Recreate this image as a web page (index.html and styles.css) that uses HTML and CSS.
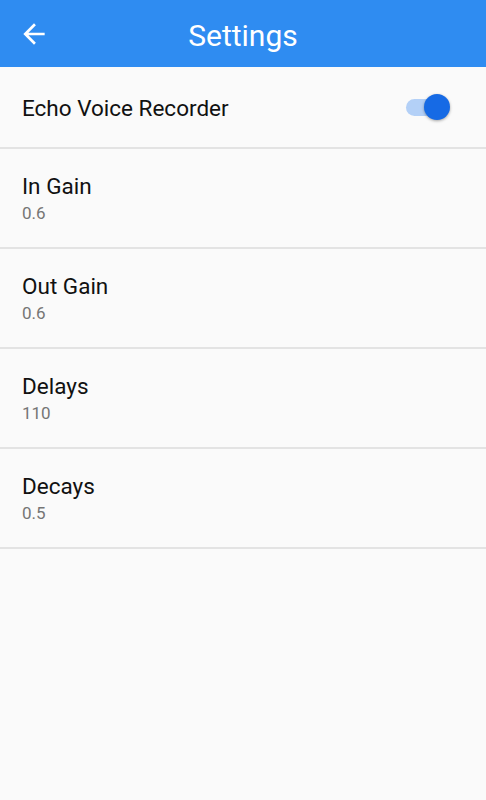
FILE: index.html
```html
<!DOCTYPE html>
<html lang="en">
<head>
    <meta charset="UTF-8">
    <meta name="viewport" content="width=device-width, initial-scale=1.0">
    <title>Settings</title>
    <link rel="stylesheet" href="styles.css">
</head>
<body>

<div class="toolbar">
    <button class="back-btn" aria-label="Back">
        <svg width="32" height="32" viewBox="0 0 24 24"><path fill="#fff" d="M20 11H7.83l5.59-5.59L12 4l-8 8 8 8 1.41-1.41L7.83 13H20v-2z"/></svg>
    </button>
    <h1>Settings</h1>
</div>

<ul class="prefs">
    <li class="pref pref-switch">
        <span class="pref-title">Echo Voice Recorder</span>
        <span class="switch on"><span class="track"></span><span class="thumb"></span></span>
    </li>
    <li class="pref">
        <span class="pref-title">In Gain</span>
        <span class="pref-summary">0.6</span>
    </li>
    <li class="pref">
        <span class="pref-title">Out Gain</span>
        <span class="pref-summary">0.6</span>
    </li>
    <li class="pref">
        <span class="pref-title">Delays</span>
        <span class="pref-summary">110</span>
    </li>
    <li class="pref">
        <span class="pref-title">Decays</span>
        <span class="pref-summary">0.5</span>
    </li>
</ul>

</body>
</html>
```

FILE: styles.css
```css
body {
    font-family: Roboto, "Noto Sans", sans-serif;
    background-color: #fafafa;
    margin: 0;
    padding: 0;
}
.toolbar {
    position: relative;
    height: 64px;
    padding-top: 3px;
    background-color: #2f8cf1;
    display: flex;
    align-items: center;
    justify-content: center;
}
.back-btn {
    position: absolute;
    left: 18px;
    top: 18px;
    width: 32px;
    height: 32px;
    padding: 0;
    border: none;
    background: none;
    display: flex;
}
.toolbar h1 {
    margin: 0;
    color: #fff;
    font-size: 30px;
    font-weight: 400;
}
.prefs {
    list-style: none;
    margin: 0;
    padding: 0;
}
.pref {
    display: flex;
    flex-direction: column;
    justify-content: center;
    height: 96px;
    padding: 2px 22px 0;
    border-bottom: 2px solid #e3e3e3;
}
.pref-switch {
    flex-direction: row;
    align-items: center;
    justify-content: space-between;
    height: 78px;
    padding-right: 36px;
}
.pref-title {
    font-size: 22.5px;
    color: #111;
    line-height: 28px;
}
.pref-summary {
    font-size: 17px;
    color: #757575;
    line-height: 27px;
}
.switch {
    position: relative;
    width: 44px;
    height: 26px;
    margin-top: -2px;
}
.switch .track {
    position: absolute;
    left: 0;
    top: 5px;
    width: 36px;
    height: 17px;
    border-radius: 9px;
    background-color: #b3d0f7;
}
.switch .thumb {
    position: absolute;
    right: 0;
    top: 0;
    width: 26px;
    height: 26px;
    border-radius: 50%;
    background-color: #166ae5;
    box-shadow: 0 1px 3px rgba(0, 0, 0, 0.35);
}
```
